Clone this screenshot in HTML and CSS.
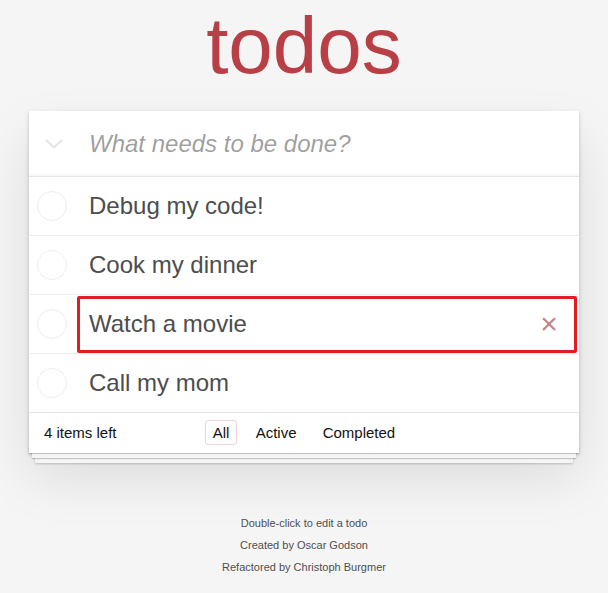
FILE: index.html
```html
<!DOCTYPE html>
<html lang="en">
<head>
<meta charset="utf-8">
<title>todos</title>
<link rel="stylesheet" href="styles.css">
</head>
<body>
<div class="page">
  <h1 class="title">todos</h1>
  <section class="todoapp">
    <header class="new-todo">
      <span class="toggle-all">
        <svg width="18" height="10" viewBox="0 0 18 10"><polyline points="1.5,1.5 9,8.5 16.5,1.5" fill="none" stroke="#e6e6e6" stroke-width="2.2" stroke-linecap="round" stroke-linejoin="round"/></svg>
      </span>
      <span class="placeholder">What needs to be done?</span>
    </header>
    <ul class="todo-list">
      <li class="todo"><span class="toggle"></span><span class="label">Debug my code!</span></li>
      <li class="todo"><span class="toggle"></span><span class="label">Cook my dinner</span></li>
      <li class="todo hovered"><span class="toggle"></span><span class="label">Watch a movie</span><span class="destroy">×</span><span class="highlight"></span></li>
      <li class="todo"><span class="toggle"></span><span class="label">Call my mom</span></li>
    </ul>
    <footer class="footer">
      <span class="todo-count"><strong class="count">4</strong> items left</span>
      <ul class="filters">
        <li><a class="filter selected">All</a></li>
        <li><a class="filter">Active</a></li>
        <li><a class="filter">Completed</a></li>
      </ul>
      <span class="spacer"></span>
    </footer>
  </section>
  <footer class="info">
    <p>Double-click to edit a todo</p>
    <p>Created by Oscar Godson</p>
    <p>Refactored by Christoph Burgmer</p>
  </footer>
</div>
</body>
</html>
```
FILE: styles.css
```css
html, body {
  margin: 0;
  padding: 0;
}
body {
  background: #f5f5f5;
  font-family: "Liberation Sans", Arial, sans-serif;
  font-size: 14px;
  line-height: 1.4em;
  color: #111;
}
.page {
  max-width: 550px;
  margin: 0 auto;
  padding-top: 0;
}
.title {
  margin: 0 0 19px 0;
  font-size: 80px;
  line-height: 92px;
  font-weight: normal;
  text-align: center;
  color: #b83f45;
}
.todoapp {
  background: #fff;
  box-shadow: 0 2px 4px 0 rgba(0,0,0,0.2), 0 25px 50px 0 rgba(0,0,0,0.1);
}
.new-todo {
  height: 65px;
  display: flex;
  align-items: center;
  box-shadow: inset 0 -2px 1px rgba(0,0,0,0.03);
}
.toggle-all {
  width: 60px;
  flex: none;
  display: flex;
  align-items: center;
  padding-left: 16px;
  box-sizing: border-box;
}
.toggle-all svg {
  display: block;
}
.placeholder {
  font-size: 24px;
  font-style: italic;
  color: rgba(0,0,0,0.4);
}
.todo-list {
  margin: 0;
  padding: 0;
  list-style: none;
  border-top: 1px solid #e6e6e6;
}
.todo {
  position: relative;
  display: flex;
  align-items: center;
  font-size: 24px;
  border-bottom: 1px solid #ededed;
}
.todo:last-child {
  border-bottom: none;
}
.toggle {
  flex: none;
  width: 30px;
  height: 30px;
  box-sizing: border-box;
  border: 1px solid #ededed;
  border-radius: 50%;
  margin: 0 22px 0 8px;
}
.label {
  flex: 1;
  padding: 15px 15px 15px 0;
  line-height: 28px;
  color: #4d4d4d;
}
.destroy {
  flex: none;
  width: 40px;
  margin-right: 10px;
  text-align: center;
  font-size: 30px;
  line-height: 40px;
  color: #c18585;
}
.highlight {
  position: absolute;
  left: 48px;
  top: 1px;
  width: 500px;
  height: 57px;
  box-sizing: border-box;
  border: 3px solid #e31b23;
  border-radius: 2px;
  pointer-events: none;
}
.footer {
  display: grid;
  grid-template-columns: 1fr auto 1fr;
  align-items: center;
  height: 20px;
  padding: 10px 15px;
  border-top: 1px solid #e6e6e6;
  font-size: 15px;
  color: #111;
  box-shadow: 0 1px 1px rgba(0,0,0,0.2),
              0 8px 0 -3px #f6f6f6,
              0 9px 1px -3px rgba(0,0,0,0.2),
              0 16px 0 -6px #f6f6f6,
              0 17px 2px -6px rgba(0,0,0,0.2);
}
.count {
  font-weight: normal;
}
.filters {
  margin: 0;
  padding: 0;
  list-style: none;
  white-space: nowrap;
}
.filters li {
  display: inline;
}
.filter {
  margin: 3px;
  padding: 3px 7px;
  border: 1px solid transparent;
  border-radius: 3px;
  color: inherit;
}
.filter.selected {
  border-color: rgba(175,47,47,0.2);
}
.info {
  margin-top: 65px;
  font-size: 11px;
  color: #4d4d4d;
  text-align: center;
  text-shadow: 0 1px 0 rgba(255,255,255,0.5);
}
.info p {
  line-height: 1;
  margin: 11px 0;
}
```
